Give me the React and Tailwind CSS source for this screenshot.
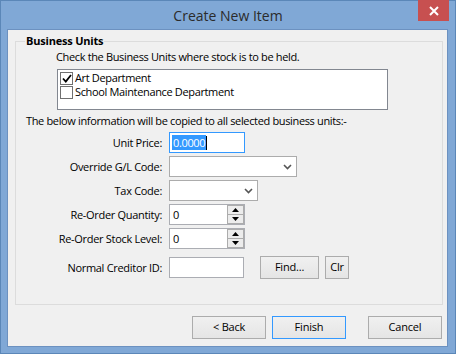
import React from "react";

const font = { fontFamily: '"Open Sans", Lato, "Liberation Sans", sans-serif' };

const Btn = ({ children, def, className = "" }) => (
  <button
    className={`h-[23px] text-[11px] tracking-[-0.2px] text-black border bg-gradient-to-b from-[#f0f0f0] to-[#e5e5e5] ${
      def ? "border-[#3399ff]" : "border-[#acacac]"
    } ${className}`}
  >
    {children}
  </button>
);

const Label = ({ children }) => (
  <div className="w-[149px] pr-[3px] text-right text-[11px] tracking-[-0.3px] leading-[21px] text-black">{children}</div>
);

const Chevron = () => (
  <svg width="9" height="6" viewBox="0 0 9 6" className="mr-[4px]">
    <path d="M1 1 L4.5 4.5 L8 1" fill="none" stroke="#555" strokeWidth="1.6" />
  </svg>
);

const Spin = ({ value }) => (
  <div className="w-[76px] h-[21px] bg-white border border-[#abadb3] flex">
    <div className="flex-1 pl-[3px] text-[11px] leading-[19px]">{value}</div>
    <div className="w-[17px] flex flex-col">
      <div className="flex-1 border border-[#acacac] bg-[#ececec] flex items-center justify-center">
        <svg width="7" height="4" viewBox="0 0 7 4"><path d="M0 4 L3.5 0 L7 4 Z" fill="#000" /></svg>
      </div>
      <div className="flex-1 border border-t-0 border-[#acacac] bg-[#ececec] flex items-center justify-center">
        <svg width="7" height="4" viewBox="0 0 7 4"><path d="M0 0 L3.5 4 L7 0 Z" fill="#000" /></svg>
      </div>
    </div>
  </div>
);

const Check = ({ checked }) => (
  <div className="w-[13px] h-[13px] shrink-0 border border-[#707070] bg-white flex items-center justify-center">
    {checked && (
      <svg width="10" height="9" viewBox="0 0 10 9">
        <path d="M1 4.5 L3.8 7.5 L9 1" fill="none" stroke="#000" strokeWidth="1.8" />
      </svg>
    )}
  </div>
);

export default function App() {
  return (
    <div className="w-[456px] h-[354px] bg-[#80a8d6] border border-[#5b87b8] flex flex-col" style={font}>
      {/* Title bar */}
      <div className="relative h-[28px] flex items-center justify-center">
        <span className="text-[14px] text-[#2b2b2b] mt-[1px]">Create New Item</span>
        <div className="absolute top-[-1px] right-[6px] w-[31px] h-[21px] bg-[#c75050] flex items-center justify-center">
          <svg width="10" height="10" viewBox="0 0 10 10">
            <path d="M1 1 L9 9 M9 1 L1 9" stroke="#fff" strokeWidth="2" />
          </svg>
        </div>
      </div>

      {/* Client area */}
      <div className="ml-[6px] w-[441px] h-[318px] border border-[#6c91c0] bg-[#f0f0f0] flex flex-col">
        {/* Group box */}
        <div className="relative ml-[7px] mr-[4px] mt-[11px] h-[264px] border border-[#dcdcdc] text-[11px] tracking-[-0.35px]">
          <div className="absolute top-[-9px] left-[9px] px-[1px] bg-[#f0f0f0] font-bold leading-[16px] tracking-[-0.2px] text-black">
            Business Units
          </div>

          <div className="pl-[40px] pt-[7px] leading-[16px] text-black">
            Check the Business Units where stock is to be held.
          </div>

          <div className="ml-[41px] mt-[4px] w-[331px] h-[41px] bg-white border border-[#828790] pl-[2px] pt-[1px]">
            <div className="flex items-center gap-[2px] h-[14px] leading-[14px] overflow-hidden">
              <Check checked />
              <span>Art Department</span>
            </div>
            <div className="flex items-center gap-[2px] h-[14px] leading-[14px] overflow-hidden">
              <Check />
              <span>School Maintenance Department</span>
            </div>
          </div>

          <div className="pl-[10px] mt-[3px] leading-[16px] text-black">
            The below information will be copied to all selected business units:-
          </div>

          <div className="mt-[3px] flex flex-col gap-[3px]">
            <div className="flex items-center">
              <Label>Unit Price:</Label>
              <div className="ml-[4px] w-[76px] h-[21px] bg-white border border-[#3399ff] flex items-center pl-[2px]">
                <span className="bg-[#3399ff] text-white leading-[15px] px-[1px]">0.0000</span>
                <span className="w-[1px] h-[14px] bg-[#000]" />
              </div>
            </div>
            <div className="flex items-center">
              <Label>Override G/L Code:</Label>
              <div className="ml-[4px] w-[128px] h-[21px] bg-white border border-[#acacac] flex items-center justify-end">
                <Chevron />
              </div>
            </div>
            <div className="flex items-center">
              <Label>Tax Code:</Label>
              <div className="ml-[4px] w-[89px] h-[21px] bg-white border border-[#acacac] flex items-center justify-end">
                <Chevron />
              </div>
            </div>
            <div className="flex items-center">
              <Label>Re-Order Quantity:</Label>
              <div className="ml-[4px]"><Spin value="0" /></div>
            </div>
            <div className="flex items-center">
              <Label>Re-Order Stock Level:</Label>
              <div className="ml-[4px]"><Spin value="0" /></div>
            </div>
            <div className="flex items-center mt-[4px]">
              <Label>Normal Creditor ID:</Label>
              <div className="ml-[4px] w-[75px] h-[21px] bg-white border border-[#abadb3]" />
              <Btn className="ml-[16px] w-[59px]">Find...</Btn>
              <Btn className="ml-[6px] w-[24px]">Clr</Btn>
            </div>
          </div>
        </div>

        {/* Bottom buttons */}
        <div className="mt-[11px] mr-[5px] flex justify-end">
          <Btn className="w-[74px]">&lt; Back</Btn>
          <Btn def className="ml-[6px] w-[74px]">Finish</Btn>
          <Btn className="ml-[22px] w-[74px]">Cancel</Btn>
        </div>
      </div>
    </div>
  );
}
